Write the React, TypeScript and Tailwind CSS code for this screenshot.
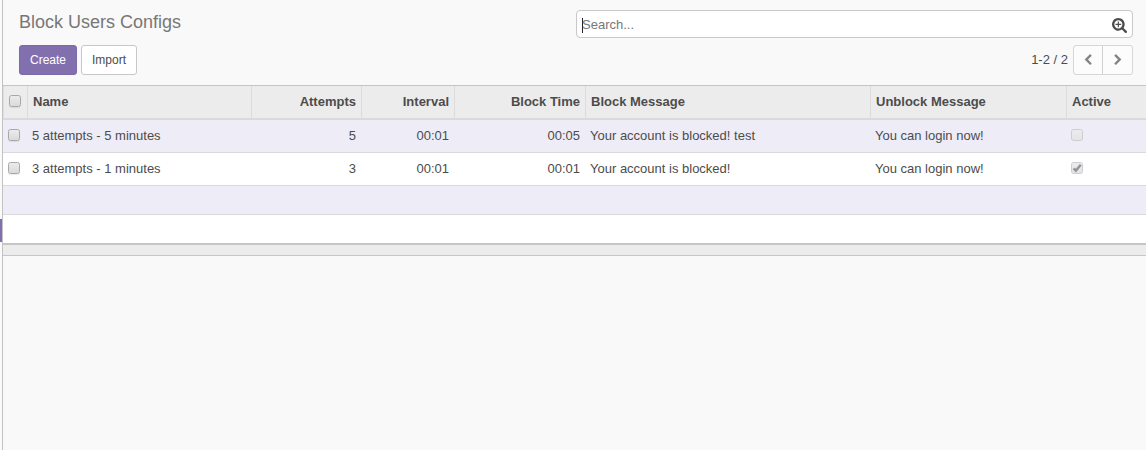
import type { ReactNode } from "react";

const GRID =
  "grid grid-cols-[24px_224px_110px_93px_131px_285px_196px_80px]";

const columns = [
  { label: "Name", right: false },
  { label: "Attempts", right: true },
  { label: "Interval", right: true },
  { label: "Block Time", right: true },
  { label: "Block Message", right: false },
  { label: "Unblock Message", right: false },
];

const rows = [
  {
    cells: ["5 attempts - 5 minutes", "5", "00:01", "00:05", "Your account is blocked! test", "You can login now!"],
    active: false,
  },
  {
    cells: ["3 attempts - 1 minutes", "3", "00:01", "00:01", "Your account is blocked!", "You can login now!"],
    active: true,
  },
];

function Checkbox({ checked = false, disabled = false }: { checked?: boolean; disabled?: boolean }) {
  return (
    <span
      role="checkbox"
      aria-checked={checked}
      className={
        disabled
          ? "block size-3 rounded-[2.5px] border border-[#cdcdcf] bg-linear-to-b from-[#ececee] to-[#e4e4e6]"
          : "block size-3 rounded-[2.5px] border border-[#a8a8a8] bg-linear-to-b from-[#ececec] to-[#dadada] shadow-[0_1px_1px_rgba(0,0,0,0.08)]"
      }
    >
      {checked && (
        <svg viewBox="0 0 10 10" className="block size-[10px]">
          <path d="M1.6 5.3 3.9 7.6 8.8 1.8" fill="none" stroke="#959595" strokeWidth="2.5" />
        </svg>
      )}
    </span>
  );
}

function SearchPlus() {
  return (
    <svg viewBox="0 32 1664 1664" className="block size-[15px] fill-[#4c4c4c]">
      <path d="M1024 704v64q0 13-9.5 22.5t-22.5 9.5h-224v224q0 13-9.5 22.5t-22.5 9.5h-64q-13 0-22.5-9.5t-9.5-22.5v-224h-224q-13 0-22.5-9.5t-9.5-22.5v-64q0-13 9.5-22.5t22.5-9.5h224v-224q0-13 9.5-22.5t22.5-9.5h64q13 0 22.5 9.5t9.5 22.5v224h224q13 0 22.5 9.5t9.5 22.5zm128 32q0-185-131.5-316.5t-316.5-131.5-316.5 131.5-131.5 316.5 131.5 316.5 316.5 131.5 316.5-131.5 131.5-316.5zm512 832q0 53-37.5 90.5t-90.5 37.5q-54 0-90-38l-343-342q-179 124-399 124-143 0-273.5-55.5t-225-150-150-225-55.5-273.5 55.5-273.5 150-225 225-150 273.5-55.5 273.5 55.5 225 150 150 225 55.5 273.5q0 220-124 399l343 343q37 37 37 90z" />
    </svg>
  );
}

function Chevron({ d }: { d: string }) {
  return (
    <svg viewBox="0 0 1792 1792" className="block size-3 fill-[#848484]">
      <path d={d} />
    </svg>
  );
}

function Cell({ right, children }: { right: boolean; children: ReactNode }) {
  return <div className={right ? "px-[5px] text-right" : "px-[5px]"}>{children}</div>;
}

export default function App() {
  return (
    <div className="flex h-[450px] w-[1146px] overflow-hidden bg-[#f9f9f9] font-['Liberation_Sans',Arial,sans-serif] text-[13px] text-[#4c4c4c]">
      <div className="w-[3px] shrink-0 border-r border-[#c2c2c2] bg-[#fafafa] pt-[219px]">
        <div className="h-[23px] bg-[#8270ae]" />
      </div>

      <div className="flex w-[1143px] shrink-0 flex-col">
        <header className="flex h-[85px] justify-between pr-[13px] pl-4">
          <div>
            <h1 className="mt-[11px] text-[18px] leading-[22px] text-[#777777]">Block Users Configs</h1>
            <div className="mt-3 flex gap-1 text-xs">
              <button className="h-[30px] w-[58px] rounded-[3px] border border-[#7c6bab] bg-[#8270ae] text-white">
                Create
              </button>
              <button className="h-[30px] w-14 rounded-[3px] border border-[#c8c8c8] bg-white">Import</button>
            </div>
          </div>

          <div className="w-[557px]">
            <div className="mt-2.5 flex h-7 items-center justify-between rounded-[4px] border border-[#c8c8c8] bg-white pr-[5px] pl-[5px]">
              <div className="flex items-center pt-[2px]">
                <span className="h-[15px] w-px bg-[#222222]" />
                <span className="-ml-px leading-4 text-[#777777]">Search...</span>
              </div>
              <div className="pt-[3px]">
                <SearchPlus />
              </div>
            </div>
            <div className="mt-[7px] flex h-[30px] items-center justify-end">
              <span>1-2 / 2</span>
              <div className="ml-[5px] flex h-[30px] w-[60px] rounded-[3px] border border-[#d6d6d6] bg-[#fcfcfc]">
                <button className="flex w-[29px] items-center justify-center border-r border-[#d0d0d0] pb-px">
                  <Chevron d="M1427 301l-531 531 531 531q19 19 19 45t-19 45l-166 166q-19 19-45 19t-45-19l-742-742q-19-19-19-45t19-45l742-742q19-19 45-19t45 19l166 166q19 19 19 45t-19 45z" />
                </button>
                <button className="flex w-[29px] items-center justify-center pb-px">
                  <Chevron d="M1363 877l-742 742q-19 19-45 19t-45-19l-166-166q-19-19-19-45t19-45l531-531-531-531q-19-19-19-45t19-45l166-166q19-19 45-19t45 19l742 742q19 19 19 45t-19 45z" />
                </button>
              </div>
            </div>
          </div>
        </header>

        <div className="border-t border-[#c4c4c4]">
          <div className={`${GRID} h-[34px] border-b-2 border-[#dadada] bg-[#ececec] font-bold leading-8`}>
            <div className="border-l border-[#dfdfdf] pt-[9px] pl-[5px]">
              <Checkbox />
            </div>
            {columns.map((c) => (
              <div
                key={c.label}
                className={
                  c.right
                    ? "border-l border-[#dcdcdc] px-[5px] text-right"
                    : "border-l border-[#dcdcdc] px-[5px]"
                }
              >
                {c.label}
              </div>
            ))}
            <div className="border-l border-[#dcdcdc] px-[5px]">Active</div>
          </div>

          {rows.map((row) => (
            <div
              key={row.cells[0]}
              className={`${GRID} h-[33px] border-b border-[#dadada] leading-8 odd:bg-white even:bg-[#eeecf7]`}
            >
              <div className="pt-[9px] pl-[5px]">
                <Checkbox />
              </div>
              {row.cells.map((text, i) => (
                <Cell key={i} right={columns[i].right}>
                  {text}
                </Cell>
              ))}
              <div className="pt-[9px] pl-[5px]">
                <Checkbox checked={row.active} disabled />
              </div>
            </div>
          ))}
          <div className="h-[29px] border-b border-[#dadada] bg-[#eeecf7]" />
          <div className="h-7 bg-white" />
          <div className="h-[13px] border-t-2 border-b border-t-[#c6c6c6] border-b-[#c6c6c6] bg-[#ececec]" />
        </div>
      </div>
    </div>
  );
}
